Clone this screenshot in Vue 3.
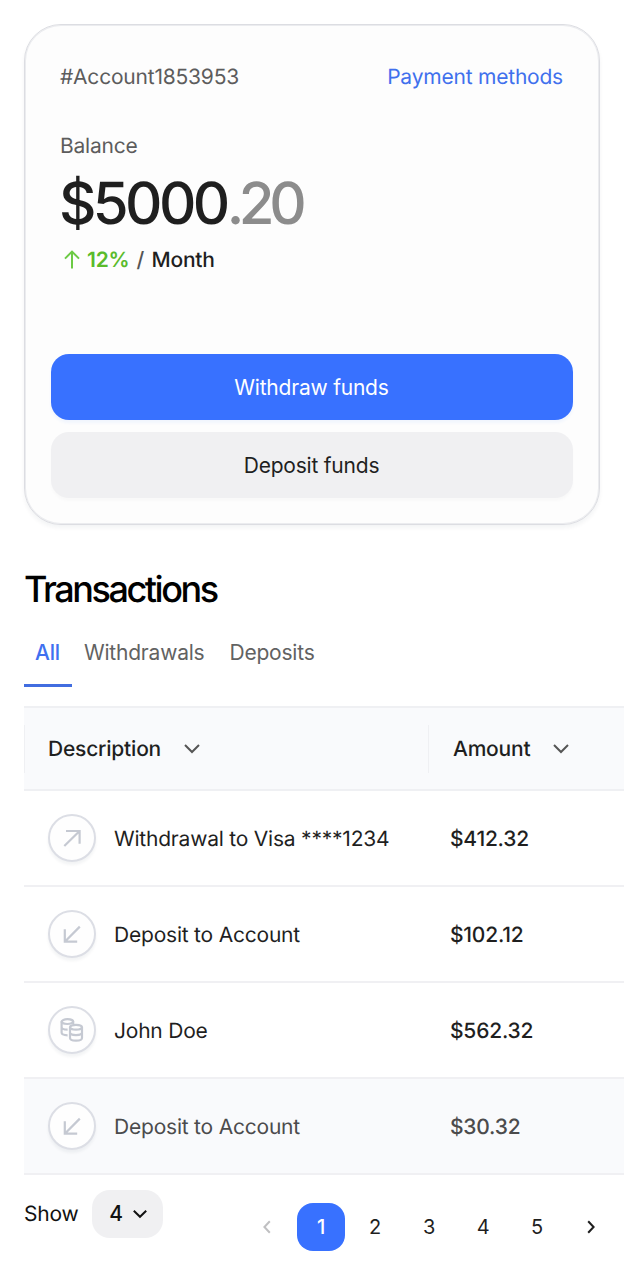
<script setup>
import { ref } from 'vue'

const tabs = ['All', 'Withdrawals', 'Deposits']
const activeTab = ref('All')
const rows = [
  { icon: 'up', text: 'Withdrawal to Visa ****1234', amount: '$412.32' },
  { icon: 'down', text: 'Deposit to Account', amount: '$102.12' },
  { icon: 'coins', text: 'John Doe', amount: '$562.32' },
  { icon: 'down', text: 'Deposit to Account', amount: '$30.32', muted: true },
]
const pages = [1, 2, 3, 4, 5]
const page = ref(1)
</script>

<template>
  <main class="page">
    <section class="card">
      <div class="card-head">
        <span class="account">#Account1853953</span>
        <a class="link">Payment methods</a>
      </div>
      <div class="label">Balance</div>
      <div class="balance">$5000<span class="cents">.20</span></div>
      <div class="trend">
        <svg class="trend-icon" width="18" height="20" viewBox="0 0 18 20"><path d="M9 18.5V1.8M2 8.6L9 1.6L16 8.6" /></svg>
        <span class="pct">12%</span>
        <span class="slash">/</span>
        <span class="month">Month</span>
      </div>
      <div class="actions">
        <button class="btn primary">Withdraw funds</button>
        <button class="btn">Deposit funds</button>
      </div>
    </section>

    <h2 class="title">Transactions</h2>
    <nav class="tabs">
      <button v-for="t in tabs" :key="t" class="tab" :class="[t.toLowerCase(), { active: t === activeTab }]" @click="activeTab = t">{{ t }}</button>
    </nav>

    <div class="table">
      <div class="thead">
        <div class="th th-desc"><span class="text">Description</span>
          <svg class="chev" width="18" height="12" viewBox="0 0 18 12"><path d="M2 2L9 9L16 2" /></svg>
        </div>
        <div class="th th-amount"><span class="text">Amount</span>
          <svg class="chev" width="18" height="12" viewBox="0 0 18 12"><path d="M2 2L9 9L16 2" /></svg>
        </div>
      </div>
      <div v-for="(r, i) in rows" :key="i" class="row" :class="{ muted: r.muted }">
        <div class="desc">
          <span class="badge">
            <svg v-if="r.icon === 'up'" width="24" height="24" viewBox="0 0 24 24"><path d="M4.3 20L19.6 5M6 5H19.6V17.7" /></svg>
            <svg v-else-if="r.icon === 'down'" width="24" height="24" viewBox="0 0 24 24"><path d="M19.8 4.6L4.8 19.7M4.8 7.3V19.7H17.2" /></svg>
            <svg v-else width="24" height="24" viewBox="0 0 24 24">
              <ellipse cx="7.4" cy="3.6" rx="5.8" ry="2.4" />
              <path d="M1.6 3.6V14.6C1.6 16.2 4.2 17.3 7.6 17.3M1.6 9C1.6 10.6 4.2 11.6 7.6 11.6M13.2 3.6V6" />
              <ellipse cx="16" cy="9.2" rx="6" ry="2.4" />
              <path d="M10 9.2V20C10 21.6 12.6 22.6 16 22.6S22 21.6 22 20V9.2M10 14.6C10 16.2 12.6 17.1 16 17.1S22 16.2 22 14.6" />
            </svg>
          </span>
          <span class="text">{{ r.text }}</span>
        </div>
        <div class="amount text">{{ r.amount }}</div>
      </div>
    </div>

    <footer class="footer">
      <div class="show">
        <span class="text">Show</span>
        <button class="select"><span>4</span>
          <svg width="16" height="10" viewBox="0 0 16 10"><path d="M1.8 1.8L8 7.8L14.2 1.8" /></svg>
        </button>
      </div>
      <div class="pager">
        <button class="pg off"><svg width="8" height="14" viewBox="0 0 8 14"><path d="M6.8 1.2L1.4 7L6.8 12.8" /></svg></button>
        <button v-for="p in pages" :key="p" class="pg" :class="{ on: p === page }" @click="page = p">{{ p }}</button>
        <button class="pg"><svg width="8" height="14" viewBox="0 0 8 14"><path d="M1.2 1.2L6.6 7L1.2 12.8" /></svg></button>
      </div>
    </footer>
  </main>
</template>

<style>
body { background: #fff; overflow: hidden; }
</style>

<style scoped>
.page {
  box-sizing: border-box;
  width: 624px;
  height: 1278px;
  padding: 24px 0 0 24px;
  overflow: hidden;
  font-family: Inter, sans-serif;
  font-size: 21px;
  line-height: 30px;
  letter-spacing: -0.21px;
  text-rendering: geometricPrecision;
  color: #1f1f1f;
}
button {
  border: 0;
  padding: 0;
  margin: 0;
  background: none;
  font: inherit;
  letter-spacing: inherit;
  color: inherit;
}
svg {
  display: block;
  fill: none;
  stroke: currentColor;
  stroke-width: 2;
}
.card {
  box-sizing: border-box;
  width: 576px;
  height: 501px;
  padding: 38px 26px 0;
  border: 1px solid #dcdde2;
  border-radius: 37px;
  background: #fdfdfd;
  box-shadow: inset 0 0 0 1px #ebecef, 0 3px 4px rgba(20, 30, 60, 0.05);
}
.card-head {
  display: flex;
  justify-content: space-between;
  padding: 0 10px 0 9px;
}
.account, .label { color: #5c5c5c; }
.link { color: #4070ed; }
.label { margin: 39px 0 0 9px; }
.balance {
  margin: 6px 0 0 8px;
  font-size: 58px;
  line-height: 70px;
  font-weight: 500;
  letter-spacing: -3.6px;
}
.cents { color: #8c8c8c; letter-spacing: -5.4px; }
.trend {
  display: flex;
  align-items: center;
  margin: 8px 0 0 12px;
  font-weight: 500;
}
.trend-icon { color: #6cca45; margin: -2px 6px 0 0; }
.pct { color: #5abb2b; font-weight: 600; }
.slash { margin: 0 7.5px 0 7px; color: #555; }
.actions {
  display: grid;
  gap: 12px;
  margin-top: 78px;
}
.btn {
  box-sizing: border-box;
  height: 66px;
  padding: 2px 1px 0 0;
  border-radius: 18px;
  background: #f0f0f2;
  box-shadow: 0 3px 3px rgba(20, 30, 60, 0.02);
}
.btn.primary {
  background: #3871ff;
  color: #fff;
  box-shadow: 0 3px 3px rgba(56, 113, 255, 0.06);
}
.title {
  margin: 42px 0 0;
  font-size: 36px;
  line-height: 44px;
  font-weight: 500;
  letter-spacing: -2.45px;
  color: #000;
}
.tabs {
  display: flex;
  gap: 12px;
  height: 50px;
  margin-top: 26px;
}
.tab {
  box-sizing: border-box;
  height: 50px;
  padding-bottom: 18px;
  color: #626262;
}
.tab.withdrawals { margin-right: 13px; }
.tab.active {
  width: 48px;
  border-bottom: 3px solid #416de0;
  padding: 0 1px 15px 0;
  font-weight: 500;
  color: #4070f0;
}
.table { margin-top: 19px; }
.thead {
  display: flex;
  align-items: center;
  box-sizing: border-box;
  height: 85px;
  border-top: 2px solid #eff0f3;
  border-bottom: 2px solid #eff0f3;
  background: #f9fafc;
  font-weight: 500;
}
.th {
  display: flex;
  align-items: center;
  box-sizing: border-box;
  height: 48px;
  border-left: 1px solid #eff0f3;
}
.th-desc { width: 404px; padding-left: 23px; }
.th-amount { padding-left: 24px; }
.chev { margin-left: 22px; color: #555; }
.row {
  display: flex;
  box-sizing: border-box;
  height: 96px;
  align-items: center;
  border-bottom: 2px solid #f0f0f3;
}
.desc {
  display: flex;
  align-items: center;
  gap: 18px;
  box-sizing: border-box;
  width: 426px;
  padding-left: 24px;
}
.text { padding-top: 2px; }
.row .text { padding-top: 3px; }
.badge {
  display: grid;
  place-items: center;
  box-sizing: border-box;
  width: 48px;
  height: 48px;
  border: 2px solid #dcdee5;
  border-radius: 50%;
  background: #fefefe;
  color: #c5c9d2;
  box-shadow: 0 3px 3px rgba(20, 30, 60, 0.05);
}
.badge svg { stroke-width: 2.2; }
.amount { font-weight: 500; }
.row.muted { background: #f9fafc; color: #4b4b4c; }
.footer {
  display: flex;
  justify-content: space-between;
  padding: 15px 9px 0 0;
}
.show {
  display: flex;
  align-items: center;
  gap: 14px;
  height: 48px;
  color: #111;
}
.select {
  display: flex;
  align-items: center;
  justify-content: center;
  gap: 9px;
  box-sizing: border-box;
  width: 71px;
  height: 48px;
  padding-left: 1px;
  border-radius: 18px;
  background: #f0f0f2;
  font-weight: 500;
}
.pager {
  display: flex;
  gap: 6px;
  margin: 13px 0 0;
  font-size: 20px;
}
.pg {
  display: grid;
  place-items: center;
  width: 48px;
  height: 48px;
  border-radius: 16px;
}
.pg.off { color: #c0c0c2; }
.pg.on { background: #3871ff; color: #fff; font-weight: 500; }
</style>
